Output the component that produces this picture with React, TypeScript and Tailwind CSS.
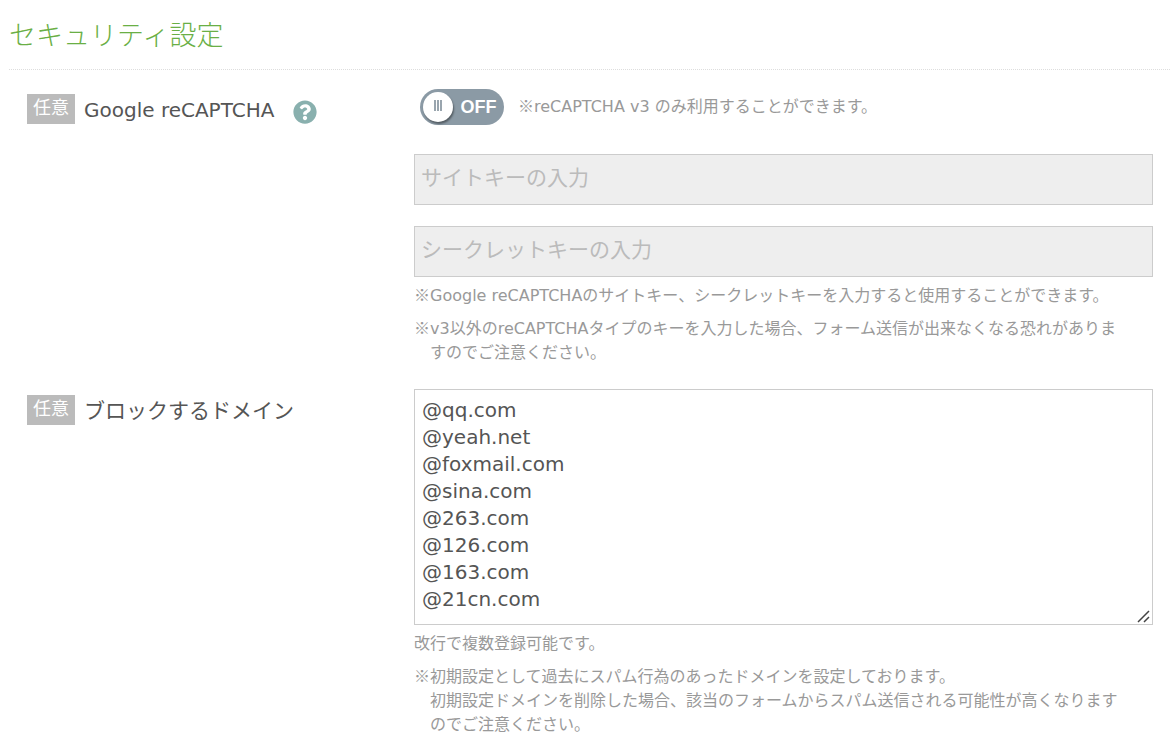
import { useState } from 'react';
import { FaQuestionCircle } from 'react-icons/fa';

const defaultDomains = [
  '@qq.com',
  '@yeah.net',
  '@foxmail.com',
  '@sina.com',
  '@263.com',
  '@126.com',
  '@163.com',
  '@21cn.com',
].join('\n');

const OptionalBadge = () => (
  <span className="h-[30px] w-12 shrink-0 bg-[#bbb] text-center text-[18px] leading-[27px] text-white">
    任意
  </span>
);

// full-width reference mark, always taken from the Japanese font
const Mark = () => (
  <span className="font-['Noto_Sans_CJK_JP',sans-serif] leading-none">※</span>
);

const App = () => {
  const [enabled, setEnabled] = useState(false);
  const [siteKey, setSiteKey] = useState('');
  const [secretKey, setSecretKey] = useState('');
  const [domains, setDomains] = useState(defaultDomains);

  const inputClass =
    'block h-[51px] w-full border border-[#ccc] bg-white px-[6px] pb-1 text-[21px] text-[#555] placeholder:text-[#bbb] disabled:bg-[#eee]';

  return (
    <main className="bg-white pt-4 pr-1 pb-4 pl-[9px] font-['DejaVu_Sans','Noto_Sans_CJK_JP',sans-serif] text-[#555]">
      <h1 className="border-b border-dotted border-[#ddd] pb-[14px] text-[27px] leading-[39px] font-light text-[#6aaf45]">
        セキュリティ設定
      </h1>
      <form className="pr-[17px] pl-[18px]" onSubmit={(e) => e.preventDefault()}>
        <div className="grid grid-cols-[387px_1fr] pt-[19px]">
          <div className="flex items-start gap-[9px] pt-[5px]">
            <OptionalBadge />
            <span className="text-[20px] leading-8">Google reCAPTCHA</span>
            <button type="button" aria-label="ヘルプ" className="ml-[10px] pt-[6px] text-[#89b0ae]">
              <FaQuestionCircle size={24} />
            </button>
          </div>
          <div>
            <div className="flex items-center gap-[14px] pl-[6px]">
              <label className="relative flex h-9 w-[84px] shrink-0 cursor-pointer items-center rounded-full bg-[#8b9aa5] has-checked:bg-[#6aaf45]">
                <input
                  type="checkbox"
                  role="switch"
                  aria-label="Google reCAPTCHA"
                  className="peer sr-only"
                  checked={enabled}
                  onChange={(e) => setEnabled(e.target.checked)}
                />
                <span className="ml-[3px] flex size-[30px] items-center justify-center gap-px rounded-full bg-white pb-1 shadow-[1px_2px_2px_rgba(0,0,0,0.4)] peer-checked:order-last peer-checked:mr-[3px]">
                  <span className="h-[11px] w-[2px] bg-[#99a5ae]" />
                  <span className="h-[11px] w-[2px] bg-[#99a5ae]" />
                  <span className="h-[11px] w-[2px] bg-[#99a5ae]" />
                </span>
                <span className="flex-1 text-center font-['Liberation_Sans',sans-serif] text-[18px] font-bold text-white">
                  {enabled ? 'ON' : 'OFF'}
                </span>
              </label>
              <p className="text-[16px] leading-6 text-[#999]">
                <Mark />
                reCAPTCHA v3 のみ利用することができます。
              </p>
            </div>
            <input
              type="text"
              name="siteKey"
              aria-label="サイトキー"
              placeholder="サイトキーの入力"
              value={siteKey}
              onChange={(e) => setSiteKey(e.target.value)}
              disabled={!enabled}
              className={`${inputClass} mt-[29px]`}
            />
            <input
              type="text"
              name="secretKey"
              aria-label="シークレットキー"
              placeholder="シークレットキーの入力"
              value={secretKey}
              onChange={(e) => setSecretKey(e.target.value)}
              disabled={!enabled}
              className={`${inputClass} mt-[21px]`}
            />
            <div className="space-y-[9px] pt-[7px] text-[16px] leading-6 text-[#999]">
              <p>
                <Mark />
                Google reCAPTCHAのサイトキー、シークレットキーを入力すると使用することができます。
              </p>
              <p className="pl-4 -indent-4">
                <Mark />
                v3以外のreCAPTCHAタイプのキーを入力した場合、フォーム送信が出来なくなる恐れがありま
                <br />
                すのでご注意ください。
              </p>
            </div>
          </div>
        </div>
        <div className="grid grid-cols-[387px_1fr] pt-6">
          <div className="flex items-start gap-[9px] pt-[6px]">
            <OptionalBadge />
            <label htmlFor="domains" className="text-[21px] leading-8">
              ブロックするドメイン
            </label>
          </div>
          <div>
            <div className="relative">
              <textarea
                id="domains"
                value={domains}
                onChange={(e) => setDomains(e.target.value)}
                rows={8}
                className="block w-full resize-y border border-[#ccc] bg-white px-[7px] pt-[7px] pb-[11px] text-[20px] leading-[27px] text-[#555] [&::-webkit-resizer]:bg-white"
              />
              <svg
                className="pointer-events-none absolute right-[3px] bottom-[2px]"
                width="13"
                height="13"
                viewBox="0 0 13 13"
                stroke="#444"
                strokeWidth="1.5"
                aria-hidden="true"
              >
                <path d="M1 12 12 1M7 12l5-5" />
              </svg>
            </div>
            <div className="space-y-[9px] pt-[7px] text-[16px] leading-6 text-[#999]">
              <p>改行で複数登録可能です。</p>
              <p className="pl-4 -indent-4">
                <Mark />
                初期設定として過去にスパム行為のあったドメインを設定しております。
                <br />
                初期設定ドメインを削除した場合、該当のフォームからスパム送信される可能性が高くなります
                <br />
                のでご注意ください。
              </p>
            </div>
          </div>
        </div>
      </form>
    </main>
  );
};

export default App;
